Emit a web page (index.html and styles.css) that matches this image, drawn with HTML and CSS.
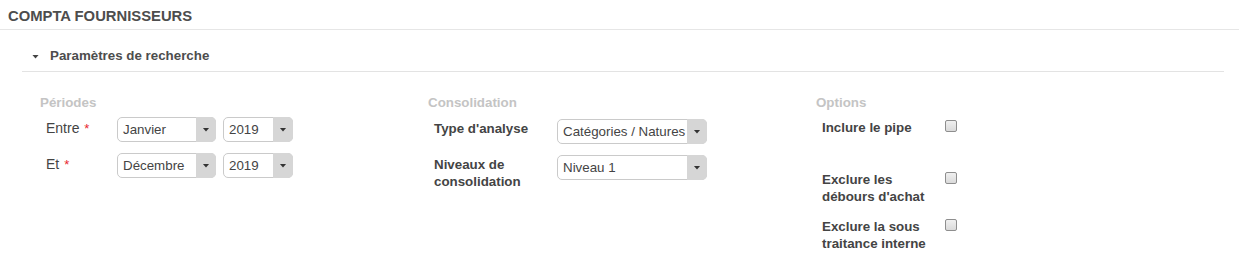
FILE: index.html
```html
<!DOCTYPE html>
<html lang="fr">
<head>
  <meta charset="UTF-8" />
  <title>Compta fournisseurs</title>
  <link rel="stylesheet" href="styles.css">
</head>
<body>
  <div class="page-title">COMPTA FOURNISSEURS</div>

  <div class="panel">
    <div class="panel-head">
      <span class="caret"></span>
      Paramètres de recherche
    </div>

    <div class="panel-body">
      <div class="col">
        <div class="col-title">Périodes</div>
        <div class="row row-first">
          <label class="lbl-period">Entre <span class="req">*</span></label>
          <div class="select w-month"><span class="val">Janvier</span><span class="arrow"></span></div>
          <div class="select w-year"><span class="val">2019</span><span class="arrow"></span></div>
        </div>
        <div class="row">
          <label class="lbl-period">Et <span class="req">*</span></label>
          <div class="select w-month"><span class="val">Décembre</span><span class="arrow"></span></div>
          <div class="select w-year"><span class="val">2019</span><span class="arrow"></span></div>
        </div>
      </div>

      <div class="col">
        <div class="col-title">Consolidation</div>
        <div class="row row-first cons">
          <label class="lbl-bold">Type d'analyse</label>
          <div class="select w-wide"><span class="val">Catégories / Natures</span><span class="arrow"></span></div>
        </div>
        <div class="row">
          <label class="lbl-bold">Niveaux de<br>consolidation</label>
          <div class="select w-wide"><span class="val">Niveau 1</span><span class="arrow"></span></div>
        </div>
      </div>

      <div class="col">
        <div class="col-title">Options</div>
        <div class="opt opt-first">
          <label class="lbl-opt">Inclure le pipe</label>
          <input type="checkbox" class="chk" />
        </div>
        <div class="opt">
          <label class="lbl-opt">Exclure les<br>débours d'achat</label>
          <input type="checkbox" class="chk" />
        </div>
        <div class="opt">
          <label class="lbl-opt">Exclure la sous<br>traitance interne</label>
          <input type="checkbox" class="chk" />
        </div>
      </div>
    </div>
  </div>
</body>
</html>
```

FILE: styles.css
```css
body {
  margin: 0;
  font-family: "Liberation Sans", Arial, sans-serif;
  font-size: 13.33px;
  color: #444;
  background: white;
}
.page-title {
  padding: 8px 8px 5px;
  font-size: 14.8px;
  line-height: 16px;
  font-weight: bold;
  color: #4d4d4d;
  border-bottom: 1px solid #e6e6e6;
}
.panel {
  margin: 0 15px 0 22px;
}
.panel-head {
  display: flex;
  align-items: center;
  padding: 18px 0 7px 10px;
  line-height: 16px;
  font-weight: bold;
  color: #4d4d4d;
  border-bottom: 1px solid #e3e3e3;
}
.caret {
  width: 7px;
  height: 4px;
  margin: 1px 11px 0 0;
  background: #444;
  clip-path: polygon(0 0, 100% 0, 50% 100%);
}
.panel-body {
  display: grid;
  grid-template-columns: repeat(3, 388px);
  padding: 23px 0 0 18px;
}
.col-title {
  line-height: 16px;
  font-weight: bold;
  color: #c4c4c4;
}
.row {
  display: flex;
  align-items: flex-start;
  margin-left: 6px;
  margin-top: 11px;
}
.row-first {
  margin-top: 6px;
}
.row-first.cons {
  margin-top: 8px;
}
.lbl-period {
  width: 71px;
  padding-top: 3px;
  font-size: 14px;
  line-height: 16px;
  color: #444;
}
.req {
  margin-left: 1px;
  color: #e8272d;
  font-size: 13px;
}
.lbl-bold {
  width: 123px;
  padding-top: 1px;
  line-height: 17px;
  font-weight: bold;
}
.select {
  display: flex;
  box-sizing: border-box;
  height: 25px;
  border: 1px solid #cacaca;
  border-radius: 5px;
  background: white;
  margin-right: 7px;
}
.val {
  flex: 1;
  overflow: hidden;
  white-space: nowrap;
  padding-left: 5px;
  line-height: 23px;
  color: #444;
}
.arrow {
  display: flex;
  align-items: center;
  justify-content: center;
  width: 20px;
  margin: -1px -1px -1px 0;
  background: #d6d6d6;
  border-radius: 0 5px 5px 0;
}
.arrow::after {
  content: "";
  width: 7px;
  height: 4px;
  background: #333;
  clip-path: polygon(0 0, 100% 0, 50% 100%);
}
.w-month {
  width: 99px;
}
.w-year {
  width: 70px;
}
.w-wide {
  width: 150px;
}
.opt {
  display: flex;
  align-items: flex-start;
  margin-left: 6px;
  margin-top: 13px;
}
.opt-first {
  margin-top: 8px;
  margin-bottom: 35px;
}
.lbl-opt {
  width: 123px;
  line-height: 17px;
  font-weight: bold;
}
.chk {
  appearance: none;
  box-sizing: border-box;
  width: 12px;
  height: 12px;
  margin: 1px 0 0 0;
  border: 1px solid #8e8e8e;
  border-radius: 2px;
  background: linear-gradient(#f0f0f0, #dadada);
}
```
